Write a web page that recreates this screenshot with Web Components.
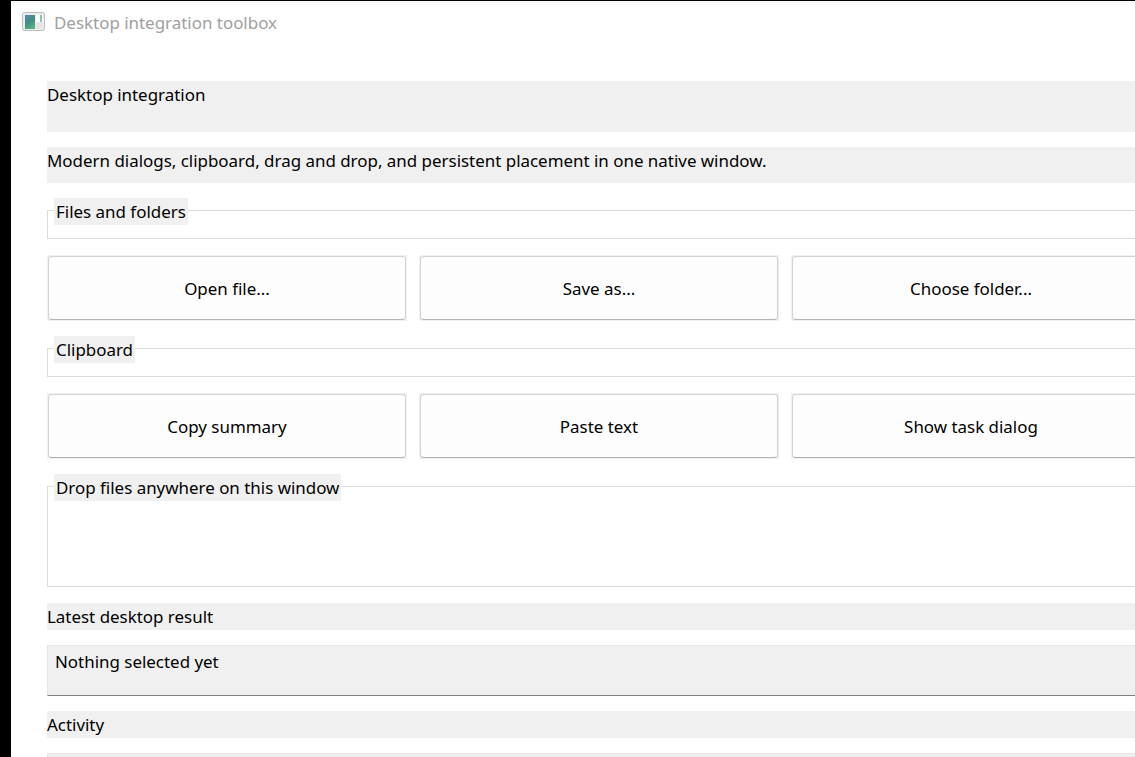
<!DOCTYPE html>
<html><head><meta charset="utf-8"><style>
html,body{margin:0;padding:0;height:100%;overflow:hidden;background:#fff}
body{font:16.93px/27px "Noto Sans","Open Sans",sans-serif;color:#000}
</style></head><body>
<app-window>
<title-bar slot="title">Desktop integration toolbox</title-bar>
<shade-label style="--h:51px">Desktop integration</shade-label>
<shade-label style="--h:36px;--mt:15px">Modern dialogs, clipboard, drag and drop, and persistent placement in one native window.</shade-label>
<group-box style="--mt:15px">Files and folders</group-box>
<button-row style="--mt:15px"><app-button>Open file...</app-button><app-button>Save as...</app-button><app-button>Choose folder...</app-button></button-row>
<group-box style="--mt:15px">Clipboard</group-box>
<button-row style="--mt:15px"><app-button>Copy summary</app-button><app-button>Paste text</app-button><app-button>Show task dialog</app-button></button-row>
<group-box style="--mt:15px;--box:101px">Drop files anywhere on this window</group-box>
<shade-label style="--h:27px;--mt:15px">Latest desktop result</shade-label>
<read-out style="--mt:15px;--h:51px">Nothing selected yet</read-out>
<shade-label style="--h:27px;--mt:15px">Activity</shade-label>
<read-out style="--mt:15px;--h:51px"></read-out>
</app-window>
<template id="t-window"><style>
:host{display:flex;width:1135px;height:757px;overflow:hidden;background:#fff}
.edge{width:11px;flex:none;background:#000}
.main{flex:1;min-width:0;border-top:1px solid #000;display:flex;flex-direction:column;overflow:hidden}
.content{width:1104px;flex:none;margin-left:36px;display:flex;flex-direction:column}
</style><div class="edge"></div><div class="main"><slot name="title"></slot><div class="content"><slot></slot></div></div></template>
<template id="t-title"><style>
:host{display:flex;flex:none;align-items:center;height:80px;box-sizing:border-box;padding:0 0 36px 11px;color:#a0a0a0;line-height:26px}
svg{display:block;margin:-3px 9px 0 0;flex:none}
.t{margin-top:-1px}
</style><svg width="23" height="19" viewBox="0 0 23 19"><defs><linearGradient id="g" x1="0" y1="0" x2="0.5" y2="1"><stop offset="0" stop-color="#5a86a6"/><stop offset=".6" stop-color="#3f8f86"/><stop offset="1" stop-color="#58b080"/></linearGradient></defs><rect x=".5" y=".5" width="22" height="18" rx="2" fill="#ececec" stroke="#bdbdbd"/><rect x="3" y="3" width="10" height="14" fill="url(#g)"/><rect x="14" y="3" width="4" height="7" fill="#fff"/><rect x="18" y="3" width="2" height="7" fill="#8fc3a8"/><rect x="20" y="3" width="1" height="7" fill="#fff"/><rect x="14" y="11" width="7" height="6" fill="#e4e4e4"/></svg><div class="t"><slot></slot></div></template>
<template id="t-shade"><style>
:host{display:block;height:var(--h);margin-top:var(--mt,0);background:#f0f0f0;white-space:nowrap}
</style><slot></slot></template>
<template id="t-group"><style>
:host{display:block;margin-top:var(--mt,0);padding-top:12px;padding-bottom:1px}
.box{height:var(--box,29px);box-sizing:border-box;border:1px solid #dcdcdc}
.legend{display:inline-block;margin:-13px 0 0 6px;padding:0 2px;background:#f0f0f0;height:27px;vertical-align:top;white-space:nowrap}
</style><div class="box"><div class="legend"><slot></slot></div></div></template>
<template id="t-row"><style>
:host{display:grid;grid-template-columns:repeat(3,360px);gap:12px;margin-top:var(--mt,0)}
</style><slot></slot></template>
<template id="t-button"><style>
:host{display:block;height:66px;box-sizing:border-box;padding:1px;background:#f0f0f0}
.b{height:100%;box-sizing:border-box;display:flex;align-items:center;justify-content:center;background:#fdfdfd;border:1px solid #d2d2d2;border-bottom-color:#b4b4b4;border-radius:4px;white-space:nowrap}
</style><div class="b"><slot></slot></div></template>
<template id="t-read"><style>
:host{display:block;height:var(--h);margin-top:var(--mt,0);box-sizing:border-box;background:#f0f0f0;border:1px solid #e6e6e6;border-bottom:1px solid #808080;padding:2px 7px;white-space:nowrap}
</style><slot></slot></template>
<script>
function def(name,tpl){customElements.define(name,class extends HTMLElement{constructor(){super();this.attachShadow({mode:'open'}).appendChild(document.getElementById(tpl).content.cloneNode(true));}});}
def('app-window','t-window');def('title-bar','t-title');def('shade-label','t-shade');def('group-box','t-group');def('button-row','t-row');def('app-button','t-button');def('read-out','t-read');
</script>
</body></html>
